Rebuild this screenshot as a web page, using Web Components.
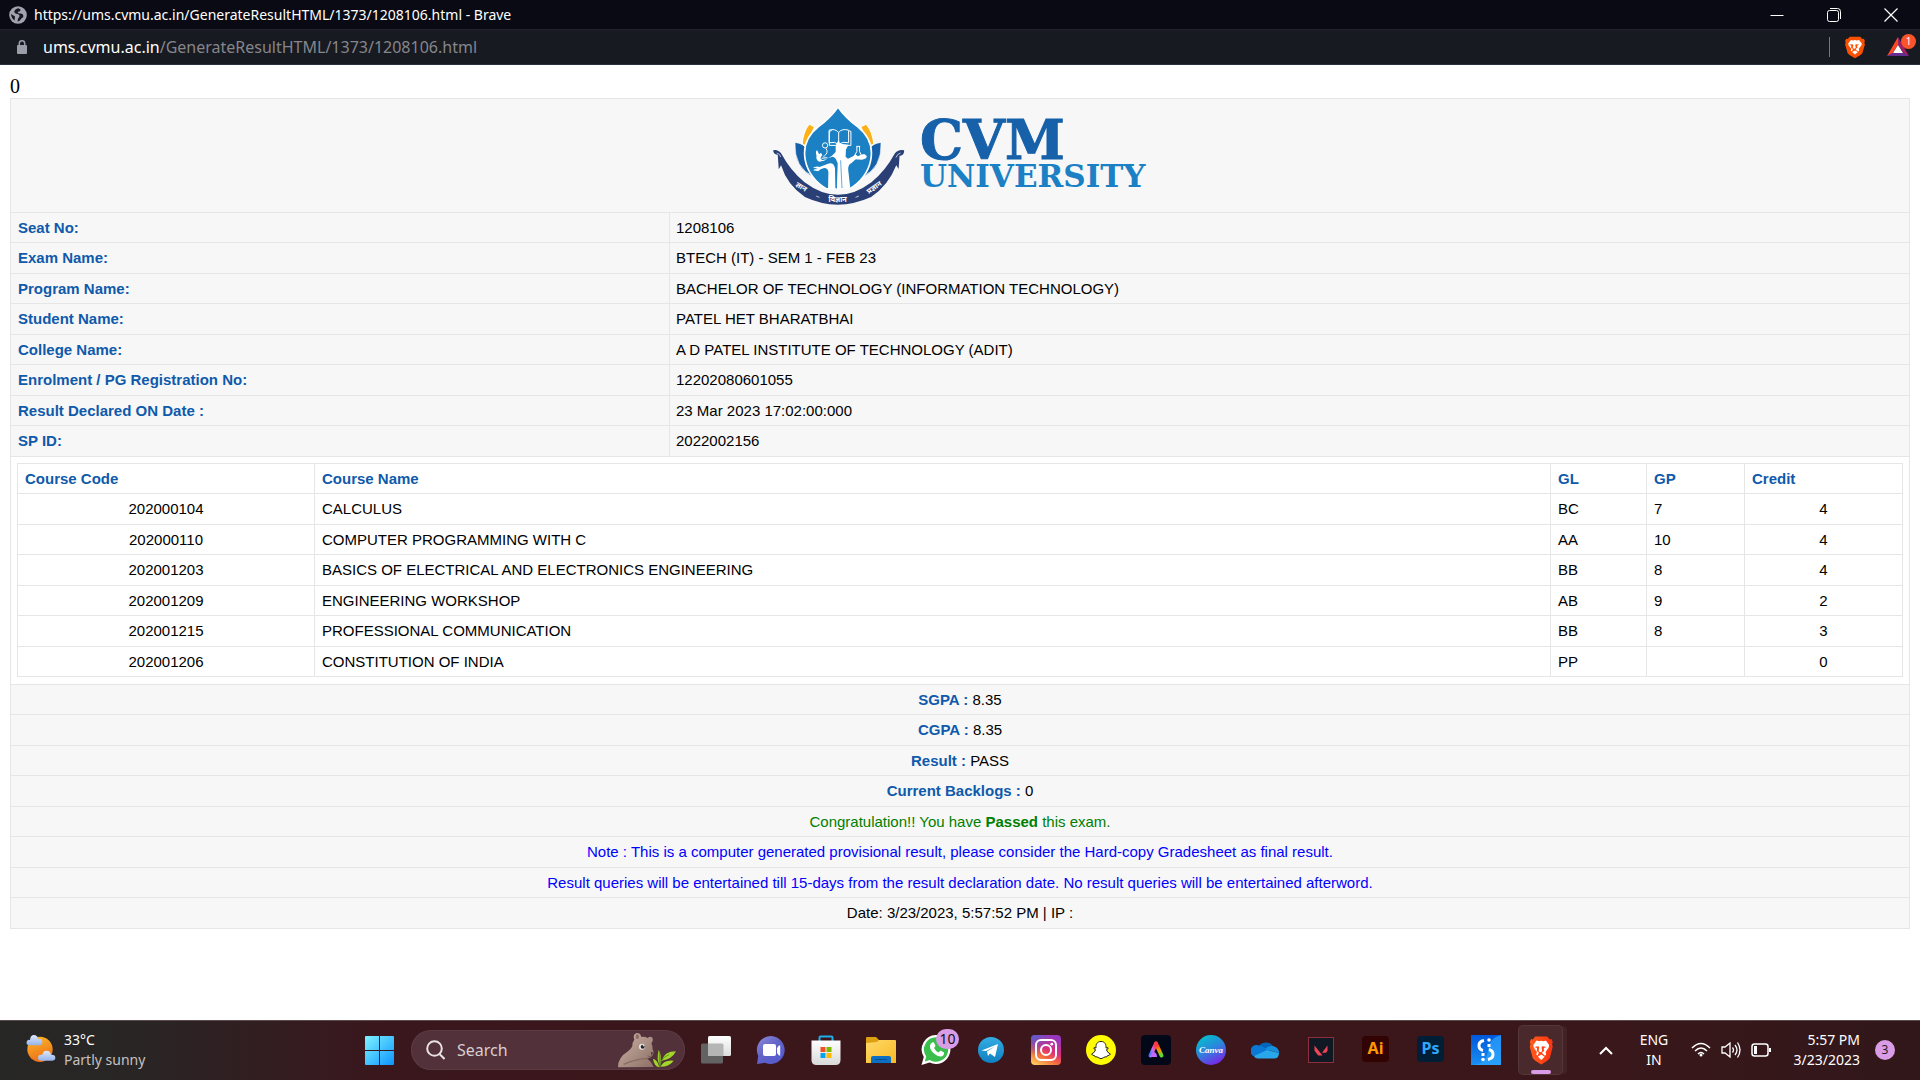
<!DOCTYPE html>
<html lang="en">
<head>
<meta charset="utf-8">
<title>https://ums.cvmu.ac.in/GenerateResultHTML/1373/1208106.html - Brave</title>
<style>
html, body { height: 100%; margin: 0; }
body { display: flex; flex-direction: column; background: #fff; color: #000; }
result-page { flex: 1; }
</style>
</head>
<body>
<title-bar>https://ums.cvmu.ac.in/GenerateResultHTML/1373/1208106.html - Brave</title-bar>
<address-bar><span slot="host">ums.cvmu.ac.in</span><span slot="path">/GenerateResultHTML/1373/1208106.html</span></address-bar>
<result-page></result-page>
<task-bar></task-bar>
<script>
const define = (name, html) => customElements.define(name, class extends HTMLElement {
  constructor() {
    super();
    const root = this.attachShadow({ mode: 'open' });
    const t = document.createElement('template');
    t.innerHTML = typeof html === 'function' ? html(this) : html;
    root.append(t.content.cloneNode(true));
  }
});

const BUTTON = 'button{display:flex;align-items:center;justify-content:center;margin:0;padding:0;border:0;background:none;color:inherit;font:inherit}svg{display:block}';

const LION = `<path fill="FILL" d="M8 1h14l3 3 2-.4 1.500 3-.8 2.400.8 2.500-3.500 12L22 26l-7 4-7-4-3-2.500-3.500-12L2.300 9l-.8-2.400L3 3.600 5 4z"/>
<path fill="#fff" d="M9.500 5.200l3 .6 2.500-.5 2.500.5 3-.6 3.800 4.700-.6 2.800-3.600 4.400.7 2.400-1.500 1.300-3.200-2.400v-1.200l2.400-1.300-.6-1.300.3-1.700 3-1-4.300-.8-1.600.6.7 4.300-1 1-1 .1-1-.1-1-1 .7-4.300-1.600-.6-4.300.8 3 1 .3 1.700-.6 1.300 2.400 1.300v1.200L10.700 20.800 9.200 19.500l.7-2.400-3.600-4.400-.6-2.800z"/>
<path fill="#fff" d="M15 19.500l4 2.300-4 3.400-4-3.400z"/>`;

define('title-bar', `<style>
:host{display:flex;align-items:center;height:29px;padding:0 1px 0 9px;background:#0a0a14;color:#fff;border-bottom:1px solid #23232e;font:14px/20px "Noto Sans",sans-serif}
.t{flex:1;margin-left:7px}
${BUTTON} button{width:57px;height:29px}
</style>
<svg width="18" height="18" viewBox="0 0 18 18"><circle cx="9" cy="9" r="8.800" fill="#a0a3ad"/><path d="M9.500 2.200c-2.500.6-4 1.800-4.200 3.500 0 1.500 1.500 1.800 3.200 2.300 2 .6 2.600 1.600 1.700 2.900-.8 1-1.200 1.600-1.400 3l-.2 1.700c1.700-.4 3-1.800 3.700-3.200l1.800-1.200c.6-1 .2-2.600-1-3.200-1.600-.6-3.600-.2-4.400-1.400-.3-.8.8-1.100 2-1.200l1-1.600zM2 8l4 2.400-.5 4C3.400 13 2.200 10.600 2 8z" fill="#15161f"/></svg>
<span class="t"><slot></slot></span>
<button aria-label="Minimise"><svg width="14" height="14"><path d="M.500 7.500h13" stroke="#fff"/></svg></button>
<button aria-label="Restore"><svg width="14" height="14" fill="none" stroke="#fff"><rect x=".500" y="2.500" width="11" height="11" rx="2"/><path d="M3 .500h7.500a3 3 0 0 1 3 3V11"/></svg></button>
<button aria-label="Close"><svg width="14" height="14"><path d="M.500.500l13 13M13.500.500l-13 13" stroke="#fff" stroke-width="1.200"/></svg></button>`);

define('address-bar', `<style>
:host{display:flex;align-items:center;height:34px;padding:0 10px 0 17px;background:#181a21;border-bottom:1px solid #2b3040;font:16px/24px "Noto Sans",sans-serif}
.u{flex:1;margin-left:16px;color:#85868b}.h{color:#fff}
${BUTTON} .sep{width:1px;height:20px;background:#77787d;margin-right:14px}
.r{margin-left:20px;position:relative}
.n{position:absolute;left:15px;top:-2px;width:15px;height:15px;border-radius:50%;background:#fb542b;color:#fff;font:10px/15px "Noto Sans",sans-serif;text-align:center}
</style>
<svg width="10" height="14" viewBox="0 0 10 14"><rect x="0" y="5" width="10" height="9" rx="1" fill="#9b9ea8"/><path d="M2.300 6V3.500a2.700 2.700 0 0 1 5.400 0V6" fill="none" stroke="#9b9ea8" stroke-width="1.500"/></svg>
<span class="u"><span class="h"><slot name="host"></slot></span><slot name="path"></slot></span>
<span class="sep"></span>
<button aria-label="Brave Shields"><svg width="22" height="23" viewBox="0 0 30 31">${LION.replace('FILL', '#fb5000')}</svg></button>
<button class="r" aria-label="Rewards"><svg width="24" height="22" viewBox="0 0 24 22"><path fill="#ff4724" d="M12 1L1 20l5-2 6-9z"/><path fill="#9e1f63" d="M12 1l11 19-5-2-6-9z"/><path fill="#662d91" d="M1 20h22l-5-3H6z"/><path fill="#fff" d="M12 9l5 8H7z"/></svg><span class="n">1</span></button>`);

define('university-logo', `<style>
:host{display:flex;justify-content:center;align-items:center;gap:15px;height:113px}
.w{display:flex;flex-direction:column;width:228px;padding-bottom:4px;font-family:"DejaVu Serif",serif;font-weight:bold}
.c{font-size:54px;line-height:44px;color:#1661a9;-webkit-text-stroke:1px #1661a9}
.v{font-size:31px;line-height:28px;color:#1b80c4}
svg{display:block}
</style>
<svg width="133" height="98" viewBox="37 35 399 296">
<path fill="#fbb117" stroke="#fff" stroke-width="3" d="M148 87l16 8-26 56-11-3q2-38 21-61zM320 87l-16 8 26 56 13-3q-3-38-23-61z"/>
<path fill="#1661a9" stroke="#fff" stroke-width="2" d="M105 142q26 2 37 22l20 82q-60-26-57-104zM365 142q-26 2-37 22l-20 82q60-26 57-104z"/>
<path fill="#1b80c4" stroke="#fff" stroke-width="5" d="M235 35q22 32 60 60c70 56 42 150-25 187h-70c-67-37-95-131-25-187q38-28 60-60z"/>
<g fill="none" stroke="#fff" stroke-width="3"><path d="M216 106l-7 3v42h26l2-2 2 2h35v-42l-7-3v37q-18-5-30 5-12-10-29-5v-38q18-6 29 7 10-13 30-7M237 112v36"/><path d="M290 154h12M292 155v14l-8 15q0 3 4 3h16q4 0 3-3l-7-15v-14"/><circle cx="196" cy="151" r="8"/><path d="M199 160q8 14-5 22M185 190l18-2M190 182l5 5"/></g>
<path fill="#fff" d="M231 282l2-75q-2-20-14-22-14 1-26 12l-15 3q-10-4-8-18-4-14 2-16l6 12 6-5 3 7-5 10 5 6q16-4 29-13l12-12V151l9-17 4 12 26 3-8 14-1 22 7 6q17-6 22-13l8 6 10-5 9-2 8 6-2 7-12 4-23-1q-18 8-21 22l4 62z"/>
<path fill="#fff" d="M205 280l1-48q-1-13-13-13-12 2-18 10l-15-3 4-3 10-1-15-5 14-2q7 2 10 0l20-8q19-8 23 14l1 59zM252 281l-3-71q4-12 18-15l23-4-14 13q-12 5-10 23l6 53z"/>
<path d="M230 282l3-80M247 280l-4-84" stroke="#1b80c4" stroke-width="2"/>
<path fill="#293f76" d="M39 166q14-4 25 10 28 52 70 86 101 76 202 0 42-34 70-86 11-14 29-10-1 18-14 16l-3 40-7-11q-24 61-76 96-102 46-200 0-54-37-72-96l-7 12-3-44q-12 1-14-13z"/>
<path fill="none" stroke="#fff" stroke-width="2" d="M50 174q10 2 12 12M424 174q-10 2-14 14M169 304l10 4M298 304l-10 4"/>
<g fill="#fff" font-family="Noto Sans Devanagari,Noto Sans,sans-serif" font-size="22" font-weight="bold" text-anchor="middle">
<text transform="translate(120 282) rotate(32)">ज्ञान</text><text x="234" y="322">विज्ञान</text><text transform="translate(348 284) rotate(-35)">प्रज्ञान</text></g>
</svg>
<div class="w"><span class="c">CVM</span><span class="v">UNIVERSITY</span></div>`);

const info = [['Seat No:', '1208106'], ['Exam Name:', 'BTECH (IT) - SEM 1 - FEB 23'], ['Program Name:', 'BACHELOR OF TECHNOLOGY (INFORMATION TECHNOLOGY)'], ['Student Name:', 'PATEL HET BHARATBHAI'], ['College Name:', 'A D PATEL INSTITUTE OF TECHNOLOGY (ADIT)'], ['Enrolment / PG Registration No:', '12202080601055'], ['Result Declared ON Date :', '23 Mar 2023 17:02:00:000'], ['SP ID:', '2022002156']];
const courses = [['202000104', 'CALCULUS', 'BC', '7', '4'], ['202000110', 'COMPUTER PROGRAMMING WITH C', 'AA', '10', '4'], ['202001203', 'BASICS OF ELECTRICAL AND ELECTRONICS ENGINEERING', 'BB', '8', '4'], ['202001209', 'ENGINEERING WORKSHOP', 'AB', '9', '2'], ['202001215', 'PROFESSIONAL COMMUNICATION', 'BB', '8', '3'], ['202001206', 'CONSTITUTION OF INDIA', 'PP', '', '0']];
const TABLE = `table{width:100%;border-collapse:separate;border-spacing:0;table-layout:fixed}
tr{height:30px}tr:nth-child(even){height:31px}
th,td{box-sizing:border-box;padding:0 7px;border-bottom:1px solid #e6e6e6;line-height:20px;text-align:left;vertical-align:middle}
th{color:#0f5aab}`;

define('student-info', `<style>:host{display:block}${TABLE} td{border-left:1px solid #e6e6e6}th,td{padding:0 6px}th{padding-left:7px}.k{width:658px}</style>
<table><colgroup><col class="k"><col></colgroup><tbody>${info.map(r => `<tr><th scope="row">${r[0]}</th><td>${r[1]}</td></tr>`).join('')}</tbody></table>`);

define('course-grades', `<style>:host{display:block;padding:6px 6px 7px;background:#fff;border-bottom:1px solid #e6e6e6}${TABLE}
table{border-top:1px solid #e6e6e6;border-right:1px solid #e6e6e6}
th,td{border-left:1px solid #e6e6e6}td:first-child,td:last-child{text-align:center}
.code{width:297px}.gl{width:96px}.gp{width:98px}.cr{width:158px}</style>
<table><colgroup><col class="code"><col><col class="gl"><col class="gp"><col class="cr"></colgroup>
<tr><th scope="col">Course Code</th><th scope="col">Course Name</th><th scope="col">GL</th><th scope="col">GP</th><th scope="col">Credit</th></tr>
${courses.map(r => `<tr>${r.map(c => `<td>${c}</td>`).join('')}</tr>`).join('')}</table>`);

define('summary-rows', `<style>:host{display:block;text-align:center}
div{box-sizing:border-box;height:30px;line-height:29px;border-bottom:1px solid #e6e6e6}div:nth-of-type(even){height:31px;line-height:30px}
b{color:#0f5aab}.g,.g b{color:#008000}.n{color:#00f}</style>
<div><b>SGPA :</b> 8.35</div><div><b>CGPA :</b> 8.35</div><div><b>Result :</b> PASS</div><div><b>Current Backlogs :</b> 0</div>
<div class="g">Congratulation!! You have <b>Passed</b> this exam.</div>
<div class="n">Note : This is a computer generated provisional result, please consider the Hard-copy Gradesheet as final result.</div>
<div class="n">Result queries will be entertained till 15-days from the result declaration date. No result queries will be entertained afterword.</div>
<div>Date: 3/23/2023, 5:57:52 PM | IP :</div>`);

define('result-page', `<style>:host{display:block;padding:10px;font:20px/23px "Liberation Serif",serif;background:#fff}
main{border:1px solid #e6e6e6;border-bottom:0;background:#f7f7f7;font:15px/20px "Liberation Sans",sans-serif}
university-logo{border-bottom:1px solid #e6e6e6}</style>
<div>0</div><main><university-logo></university-logo><student-info></student-info><course-grades></course-grades><summary-rows></summary-rows></main>`);

/* Taskbar artwork, each on a 30 by 30 grid */
const icons = {
start: `<defs><linearGradient id="a" gradientUnits="userSpaceOnUse" x2="30" y2="30"><stop stop-color="#80f4ff"/><stop offset="1" stop-color="#0a94ff"/></linearGradient></defs><path fill="url(#a)" d="M0 2q0-1 1-1h13v14H0zM15 1h13q1 0 1 1v13H15zM0 16h14v14H1q-1 0-1-1zM15 16h14v13q0 1-1 1H15z"/>`,
view: `<defs><linearGradient id="a" x2="0" y2="1"><stop stop-color="#fff"/><stop offset="1" stop-color="#dcdcdc"/></linearGradient></defs><rect y="8.500" width="22" height="20" rx="1.500" fill="#626263"/><rect x="7" y="1" width="23" height="20" rx="1.500" fill="url(#a)"/><path d="M7 8.500h14q1.500 0 1.500 1.500v11H8.500Q7 21 7 19.500z" fill="#b5b5b5"/>`,
chat: `<defs><linearGradient id="a" x2=".8" y2="1"><stop stop-color="#8e8cd8"/><stop offset=".5" stop-color="#6264c7"/><stop offset="1" stop-color="#5559d0"/></linearGradient></defs><path fill="url(#a)" d="M15 1a14 14 0 1 1-6 26.800L1 29l1.200-8A14 14 0 0 1 15 1z"/><rect x="7" y="9" width="13" height="12" rx="2" fill="#fff"/><path fill="#fff" d="M21 13l2-2.500h1.200v10H23L21 18z"/>`,
store: `<defs><linearGradient id="a" x2="0" y2="1"><stop stop-color="#fff"/><stop offset="1" stop-color="#d9d9d9"/></linearGradient></defs><path d="M8.500 7V2.500q0-1 1-1h11q1 0 1 1V7" fill="none" stroke="#1eaee8" stroke-width="2"/><path fill="url(#a)" d="M.500 5.500h29V25q0 5-5 5H5.500q-5 0-5-5z"/><path fill="#f25022" d="M9.500 12h5v5h-5z"/><path fill="#7fba00" d="M15.500 12h5v5h-5z"/><path fill="#00a4ef" d="M9.500 18h5v5h-5z"/><path fill="#ffb900" d="M15.500 18h5v5h-5z"/>`,
folder: `<defs><linearGradient id="a" x2="1" y2="1"><stop stop-color="#ffd96a"/><stop offset="1" stop-color="#f8ba24"/></linearGradient></defs><path fill="#dda010" d="M0 3q0-1 1-1h9l3 3v6H0z"/><path fill="url(#a)" d="M0 8l11-1 2-2h16q1 0 1 1v22H0z"/><path fill="#0b6fc4" d="M5 28v-5q0-2 2-2h16q2 0 2 2v5z"/><path d="M9 24.500h12" stroke="#0a4c91"/>`,
whatsapp: `<path fill="#fff" d="M15.500 0a14.500 14.500 0 1 1-7 27.500L.500 30l2.300-8A14.500 14.500 0 0 1 15.500 0z"/><path fill="#3bbf4c" d="M15.500 2.300a12.200 12.200 0 1 1-6.700 22.700l-5 1.500 1.400-5A12.200 12.200 0 0 1 15.500 2.300z"/><path fill="#fff" d="M11 7.500q1-.7 2 0l1.500 3.500-1.500 2q1.500 3 4.500 4.500l2-2 3.500 2q.5 3-2.800 4-3.200.5-7.200-3-4.500-4-4-8 .5-2 2-3z"/>`,
telegram: `<defs><linearGradient id="a" x2="0" y2="1"><stop stop-color="#34ade5"/><stop offset="1" stop-color="#0f7fc0"/></linearGradient></defs><circle cx="15" cy="15" r="13" fill="url(#a)"/><path fill="#fff" d="M5.500 15.500L22 9l-3 13-5-3.500-2 2.500-1-4.500 8-5-9 4.500z"/>`,
instagram: `<defs><linearGradient id="a" x1=".1" y1="1" x2=".6"><stop stop-color="#ffd25f"/><stop offset=".35" stop-color="#f36b3d"/><stop offset=".6" stop-color="#dc2f78"/><stop offset="1" stop-color="#9837bb"/></linearGradient><radialGradient id="b" cx="0" cy="0" r=".7"><stop stop-color="#4f60d8"/><stop offset="1" stop-color="#4f60d8" stop-opacity="0"/></radialGradient></defs><rect width="30" height="30" rx="4" fill="url(#a)"/><rect width="30" height="30" rx="4" fill="url(#b)"/><g fill="none" stroke="#fff" stroke-width="2"><rect x="5" y="5" width="20" height="20" rx="5"/><circle cx="15" cy="15" r="5"/></g><circle cx="20.800" cy="9.200" r="1.400" fill="#fff"/>`,
snapchat: `<circle cx="15" cy="15" r="15" fill="#fffc00"/><path fill="#fff" stroke="#222" stroke-width="1" d="M15 6.500c4 0 5.300 3 5 6.500l2-.3q1 1-1.600 2 .8 3 4 4.300-.5 1.500-3 1.700l-.6 1.200q-2-.4-3 .6-2.800 2.500-5.600 0-1-1-3-.6l-.6-1.200q-2.500-.2-3-1.700 3.200-1.300 4-4.300-2.600-1-1.600-2l2 .3c-.3-3.500 1-6.500 5-6.500z"/>`,
express: `<defs><linearGradient id="a" x1="0" y1="1" x2=".7" y2="0"><stop stop-color="#2e80ff"/><stop offset=".5" stop-color="#c86bff"/><stop offset=".9" stop-color="#ff3a50"/></linearGradient><linearGradient id="b" x2="0" y2="1"><stop stop-color="#f22"/><stop offset=".5" stop-color="#ff8a00"/><stop offset="1" stop-color="#5ddc35"/></linearGradient></defs><rect width="30" height="30" rx="4" fill="#030818"/><g fill="none" stroke-linecap="round"><path d="M15 8.500l5.500 12" stroke="url(#b)" stroke-width="4"/><path d="M15 8.500L9.500 20.500" stroke="url(#a)" stroke-width="4"/></g><path fill="#c668ff" d="M8 22l4-5q4 0 4 5z"/>`,
canva: `<defs><linearGradient id="a" x1=".2" x2=".7" y2="1"><stop stop-color="#00c4cc"/><stop offset=".5" stop-color="#2d83dd"/><stop offset="1" stop-color="#7d22e8"/></linearGradient></defs><circle cx="15" cy="15" r="15" fill="url(#a)"/><text x="15" y="18" text-anchor="middle" fill="#fff" font-family="Liberation Serif,serif" font-style="italic" font-weight="bold" font-size="9">Canva</text>`,
onedrive: `<path fill="#0364b8" d="M7 13a8.500 8.500 0 0 1 15.500-1L15 19z"/><path fill="#0a78d4" d="M8 10.500q2 0 4 1.200L22 18 3 21.500A5.800 5.800 0 0 1 8 10.500z"/><path fill="#1490df" d="M22 11q6 1.500 6 7L14 14q3-3.500 8-3z"/><path fill="#28a8ea" d="M3 21l13-6 12 3q0 5.500-5 5.500H7q-3 0-4-2.500z"/>`,
valorant: `<rect x="2.500" y="2.500" width="25" height="25" fill="#101823" stroke="#8d2f3e"/><path fill="#f04455" d="M8.500 10.500l8 10h-4.300l-3.700-4.700zM21.500 10.500v5.300l-1.500 2h-4z"/>`,
ai: `<rect x="1" y="1" width="27" height="26" rx="4" fill="#320303"/><text x="14.500" y="19" text-anchor="middle" fill="#ff9a00" font-family="Noto Sans,sans-serif" font-weight="bold" font-size="16">Ai</text>`,
ps: `<rect x="1" y="1" width="27" height="26" rx="4" fill="#001e36"/><text x="14.500" y="19" text-anchor="middle" fill="#31a8ff" font-family="Noto Sans,sans-serif" font-weight="bold" font-size="16">Ps</text>`,
studio: `<defs><linearGradient id="a" x2="0" y2="1"><stop stop-color="#0058db"/><stop offset="1" stop-color="#1b8ff2"/></linearGradient></defs><path fill="url(#a)" d="M0 0h30v30H0z"/><path fill="#2fa7ff" opacity=".7" d="M30 0v30H0q16 0 17-15Q18 3 30 0z"/><path d="M13 5.500q-5 1-5 5 0 4 4 5M17 24.500q5-1 5-5 0-4-4-5" fill="none" stroke="#fff" stroke-width="3"/><circle cx="18" cy="5" r="1.800" fill="#fff"/><path d="M18 9v3" stroke="#fff" stroke-width="3"/><circle cx="12" cy="24.500" r="1.800" fill="#fff"/><path d="M12 18v3" stroke="#fff" stroke-width="3"/>`,
brave: `<defs><linearGradient id="a"><stop stop-color="#ff5a1d"/><stop offset="1" stop-color="#ff3410"/></linearGradient></defs><g transform="translate(2.500 .500) scale(.85 .97)">${LION.replace('FILL', 'url(#a)')}</g>`
};

define('task-app', el => `<style>:host{display:flex;width:55px;height:60px;position:relative;align-items:center;justify-content:center}
${BUTTON} button{width:45px;height:50px}
:host([active]) button{border-radius:5px;background:#ffffff14;box-shadow:inset 0 0 0 1px #ffffff10,5px 0 0 -1px #ffffff0c}
:host([active])::after{content:"";position:absolute;bottom:6px;width:20px;height:4px;border-radius:2px;background:#d99ce6}
.b{position:absolute;left:28px;top:9px;width:23px;height:20px;border-radius:10px;background:#d99ce6;color:#111;font:14px/20px "Noto Sans",sans-serif;text-align:center}</style>
<button aria-label="${el.getAttribute('label')}"><svg width="30" height="30" viewBox="0 0 30 30">${icons[el.getAttribute('icon')]}</svg></button>${el.hasAttribute('badge') ? `<span class="b">${el.getAttribute('badge')}</span>` : ''}`);

define('search-box', `<style>:host{display:flex;align-items:center;box-sizing:border-box;width:274px;height:40px;margin:0 3px 0 4px;padding:0 8px 0 15px;border-radius:20px;background:#52313a;box-shadow:inset 0 0 0 1px #5b3a42}
input{flex:1;min-width:0;height:36px;padding:0;margin:0 0 0 12px;border:0;outline:0;background:none;color:#d8ced0;font:16px/24px "Noto Sans",sans-serif}input::placeholder{color:#d8ced0;opacity:1}</style>
<svg width="19" height="20" viewBox="0 0 19 20" fill="none" stroke="#e8e2e3" stroke-width="2"><circle cx="8.500" cy="8.500" r="7.300"/><path d="M13.500 14l5 5"/></svg>
<input type="text" aria-label="Search" placeholder="Search">
<svg width="60" height="36" viewBox="0 0 180 108"><defs><linearGradient id="f" x2="1" y2="1"><stop stop-color="#cbb3a6"/><stop offset="1" stop-color="#8d7067"/></linearGradient></defs>
<path fill="url(#f)" d="M3 106q0-30 27-46 14-10 16-18 0-12 6-19-6-16 7-20 12 0 14 12 10-2 19 3 8-7 14-1 4 8-3 17 5 10 4 19 5 6 0 17-4 9-17 9 14 10 20 26z"/><path d="M20 97q40-18 75-17" stroke="#75594f" stroke-width="4" fill="none" opacity=".6"/><ellipse cx="61" cy="14" rx="5" ry="7" fill="#8e6a63"/><circle cx="75" cy="44" r="9" fill="#eee8e4"/><circle cx="77" cy="44" r="6" fill="#25242b"/><circle cx="79" cy="41" r="2" fill="#fff"/><path d="M101 60l7 2-4 8z" fill="#40302e"/><path d="M92 72q10 6 15-3" stroke="#5f463f" fill="none" stroke-width="2"/>
<g fill="#a2d62a"><path d="M125 54q10 14 4 48-12-20-4-48zM108 80q14 4 19 26-16-4-19-26zM134 86q8-28 43-28-12 24-43 28zM130 104q12-22 40-18-12 18-40 18z"/></g><path d="M128 106q0-26 28-38M127 60v44" fill="none" stroke="#5b9c18" stroke-width="3"/></svg>`);

define('weather-widget', `<style>:host{display:block}${BUTTON} button{height:60px;gap:8px;text-align:left}.t{display:flex;flex-direction:column}.s{color:#c6c0c0}</style>
<button aria-label="Weather"><svg width="31" height="30" viewBox="0 0 93 90"><defs><linearGradient id="s" x1=".3" x2=".6" y2="1"><stop stop-color="#f9b52a"/><stop offset="1" stop-color="#ee6b17"/></linearGradient><linearGradient id="c" x2="0" y2="1"><stop stop-color="#dde9ff"/><stop offset="1" stop-color="#96b3e8"/></linearGradient></defs><circle cx="45" cy="43" r="38" fill="url(#s)"/><path fill="url(#c)" d="M10 31a9 9 0 0 1 1-17q3 0 4 1Q16 0 27 0q10 0 12 11 12-1 13 9 0 11-11 11z"/><path fill="url(#c)" d="M48 77a9 9 0 0 1 0-18h4q2-12 13-12 11 0 13 12 13-1 13 9 0 9-11 9z"/></svg>
<span class="t"><span>33°C</span><span class="s">Partly sunny</span></span></button>`);

define('system-tray', `<style>:host{display:flex;align-items:center;justify-content:flex-end;height:60px}${BUTTON}
button{height:60px}.lang{width:28px;margin:0 23px 0 27px;text-align:center}.st{gap:10px;margin-right:18px}
.clock{width:70px;justify-content:flex-end;text-align:right;margin-right:15px;white-space:nowrap}
.n{width:20px;height:20px;border-radius:50%;background:#d99ce6;color:#2b1822;font-size:12px;line-height:20px}</style>
<button aria-label="Show hidden icons"><svg width="14" height="9"><path d="M1 8l6-6 6 6" fill="none" stroke="#fff" stroke-width="2"/></svg></button>
<button class="lang">ENG<br>IN</button>
<button class="st" aria-label="Network, volume and battery">
<svg width="20" height="16" fill="none" stroke="#fff" stroke-width="1.500"><path d="M1 6q9-9 18 0M4 9q6-6 12 0M7 12q3-3 6 0"/><circle cx="10" cy="13" r="1.500" fill="#fff" stroke="none"/></svg>
<svg width="20" height="18" fill="none" stroke="#fff" stroke-width="1.300"><path d="M1 6h3l5-4v14l-5-4H1zM11.500 6.500q2 2.500 0 5M14 4q4 5 0 10M16.500 1.500q5 7.500 0 15"/></svg>
<svg width="21" height="14" fill="none" stroke="#fff" stroke-width="1.500"><rect x="1" y="1" width="16" height="12" rx="2.500"/><path d="M3 3h3v8H3zM18 5h2v4h-2z" fill="#fff" stroke="none"/></svg></button>
<button class="clock">5:57 PM<br>3/23/2023</button><button class="n" aria-label="3 notifications">3</button>`);

define('task-bar', `<style>:host{display:grid;grid-template-columns:1fr auto 1fr;box-sizing:border-box;height:60px;padding:0 25px;background:linear-gradient(90deg,#272726 0,#292525 7%,#3a171d 20%,#3c161a 60%,#3a171a 82%,#31171a);box-shadow:inset 0 1px #5a4a4b;color:#fff;font:14px/20px "Noto Sans",sans-serif}
nav{display:flex;align-items:center}</style>
<weather-widget></weather-widget>
<nav aria-label="Taskbar"><task-app icon="start" label="Start"></task-app><search-box></search-box>${[['view', 'Task view'], ['chat', 'Chat'], ['store', 'Microsoft Store'], ['folder', 'File Explorer'], ['whatsapp', 'WhatsApp', 'badge="10"'], ['telegram', 'Telegram'], ['instagram', 'Instagram'], ['snapchat', 'Snapchat'], ['express', 'Adobe Express'], ['canva', 'Canva'], ['onedrive', 'OneDrive'], ['valorant', 'Valorant'], ['ai', 'Illustrator'], ['ps', 'Photoshop'], ['studio', 'Studio'], ['brave', 'Brave', 'active']].map(a => `<task-app icon="${a[0]}" label="${a[1]}" ${a[2] || ''}></task-app>`).join('')}</nav>
<system-tray></system-tray>`);
</script>
</body>
</html>
